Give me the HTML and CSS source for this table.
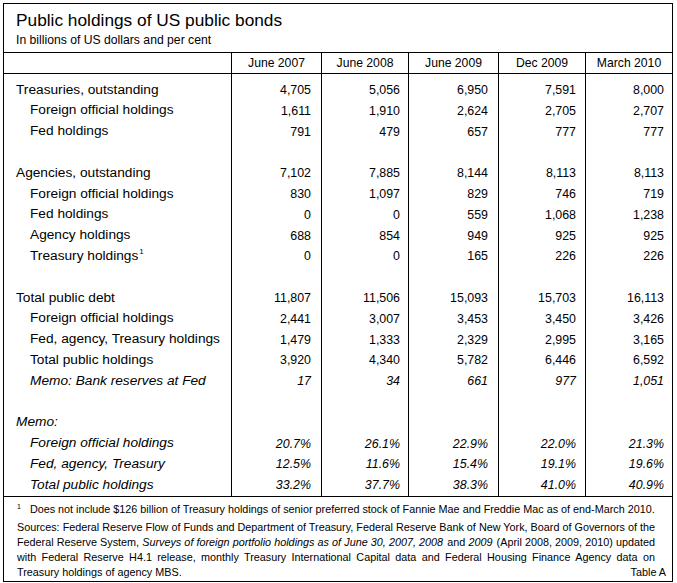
FILE: index.html
```html
<!DOCTYPE html>
<html lang="en">
<head>
<meta charset="utf-8">
<title>Public holdings of US public bonds</title>
<link rel="stylesheet" href="styles.css">
</head>
<body>
<div class="box">
  <header class="head">
    <h1 class="title">Public holdings of US public bonds</h1>
    <p class="sub">In billions of US dollars and per cent</p>
  </header>

  <div class="row colhead">
    <div class="lbl"></div>
    <div class="h">June 2007</div>
    <div class="h">June 2008</div>
    <div class="h">June 2009</div>
    <div class="h">Dec 2009</div>
    <div class="h">March 2010</div>
  </div>

  <div class="body">
    <div class="row spacer"><div></div><div></div><div></div><div></div><div></div><div></div></div>

    <div class="row"><div class="lbl">Treasuries, outstanding</div><div class="n">4,705</div><div class="n">5,056</div><div class="n">6,950</div><div class="n">7,591</div><div class="n">8,000</div></div>
    <div class="row"><div class="lbl ind">Foreign official holdings</div><div class="n">1,611</div><div class="n">1,910</div><div class="n">2,624</div><div class="n">2,705</div><div class="n">2,707</div></div>
    <div class="row"><div class="lbl ind">Fed holdings</div><div class="n">791</div><div class="n">479</div><div class="n">657</div><div class="n">777</div><div class="n">777</div></div>
    <div class="row"><div class="lbl"></div><div class="n"></div><div class="n"></div><div class="n"></div><div class="n"></div><div class="n"></div></div>

    <div class="row"><div class="lbl">Agencies, outstanding</div><div class="n">7,102</div><div class="n">7,885</div><div class="n">8,144</div><div class="n">8,113</div><div class="n">8,113</div></div>
    <div class="row"><div class="lbl ind">Foreign official holdings</div><div class="n">830</div><div class="n">1,097</div><div class="n">829</div><div class="n">746</div><div class="n">719</div></div>
    <div class="row"><div class="lbl ind">Fed holdings</div><div class="n">0</div><div class="n">0</div><div class="n">559</div><div class="n">1,068</div><div class="n">1,238</div></div>
    <div class="row"><div class="lbl ind">Agency holdings</div><div class="n">688</div><div class="n">854</div><div class="n">949</div><div class="n">925</div><div class="n">925</div></div>
    <div class="row"><div class="lbl ind">Treasury holdings<sup class="fn">1</sup></div><div class="n">0</div><div class="n">0</div><div class="n">165</div><div class="n">226</div><div class="n">226</div></div>
    <div class="row"><div class="lbl"></div><div class="n"></div><div class="n"></div><div class="n"></div><div class="n"></div><div class="n"></div></div>

    <div class="row"><div class="lbl">Total public debt</div><div class="n">11,807</div><div class="n">11,506</div><div class="n">15,093</div><div class="n">15,703</div><div class="n">16,113</div></div>
    <div class="row"><div class="lbl ind">Foreign official holdings</div><div class="n">2,441</div><div class="n">3,007</div><div class="n">3,453</div><div class="n">3,450</div><div class="n">3,426</div></div>
    <div class="row"><div class="lbl ind">Fed, agency, Treasury holdings</div><div class="n">1,479</div><div class="n">1,333</div><div class="n">2,329</div><div class="n">2,995</div><div class="n">3,165</div></div>
    <div class="row"><div class="lbl ind">Total public holdings</div><div class="n">3,920</div><div class="n">4,340</div><div class="n">5,782</div><div class="n">6,446</div><div class="n">6,592</div></div>
    <div class="row it"><div class="lbl ind">Memo: Bank reserves at Fed</div><div class="n">17</div><div class="n">34</div><div class="n">661</div><div class="n">977</div><div class="n">1,051</div></div>
    <div class="row"><div class="lbl"></div><div class="n"></div><div class="n"></div><div class="n"></div><div class="n"></div><div class="n"></div></div>

    <div class="row it"><div class="lbl">Memo:</div><div class="n"></div><div class="n"></div><div class="n"></div><div class="n"></div><div class="n"></div></div>
    <div class="row it"><div class="lbl ind">Foreign official holdings</div><div class="n">20.7%</div><div class="n">26.1%</div><div class="n">22.9%</div><div class="n">22.0%</div><div class="n">21.3%</div></div>
    <div class="row it"><div class="lbl ind">Fed, agency, Treasury</div><div class="n">12.5%</div><div class="n">11.6%</div><div class="n">15.4%</div><div class="n">19.1%</div><div class="n">19.6%</div></div>
    <div class="row it"><div class="lbl ind">Total public holdings</div><div class="n">33.2%</div><div class="n">37.7%</div><div class="n">38.3%</div><div class="n">41.0%</div><div class="n">40.9%</div></div>
  </div>

  <footer class="foot">
    <p class="note"><sup class="fnmark">1</sup>Does not include $126 billion of Treasury holdings of senior preferred stock of Fannie Mae and Freddie Mac as of end-March 2010.</p>
    <p class="sources">Sources: Federal Reserve Flow of Funds and Department of Treasury, Federal Reserve Bank of New York, Board of Governors of the Federal Reserve System, <i>Surveys of foreign portfolio holdings as of June 30, 2007, 2008</i> and <i>2009</i> (April 2008, 2009, 2010) updated with Federal Reserve H4.1 release, monthly Treasury International Capital data and Federal Housing Finance Agency data on Treasury holdings of agency MBS.</p>
    <p class="tag">Table A</p>
  </footer>
</div>
</body>
</html>
```

FILE: styles.css
```css
* { box-sizing: border-box; }

html, body {
  margin: 0;
  padding: 0;
  background: #ffffff;
}

body {
  padding: 3px 0 0 3px;
  font-family: "Liberation Sans", Arial, sans-serif;
  color: #000000;
}

.box {
  width: 670px;
  border: 1px solid #000000;
}

/* title block */
.head {
  padding: 6px 0 5px 12px;
  border-bottom: 1px solid #000000;
}

.title {
  margin: 0;
  font-size: 17.3px;
  line-height: 20px;
  font-weight: normal;
}

.sub {
  margin: 3px 0 0 0;
  font-size: 12.2px;
  line-height: 14px;
}

/* rows */
.row {
  display: grid;
  grid-template-columns: 227px 90px 87px 90px 87px 87px;
  height: 20.8px;
  line-height: 20.8px;
}

.row > div + div {
  border-left: 1px solid #000000;
}

.colhead {
  height: 21px;
  line-height: 20px;
  border-bottom: 1px solid #000000;
}

.h {
  text-align: center;
  font-size: 12.2px;
}

.spacer {
  height: 5.6px;
}

.lbl {
  padding-left: 12px;
  font-size: 13.7px;
  white-space: nowrap;
}

.lbl.ind {
  padding-left: 26px;
}

.n {
  text-align: right;
  font-size: 12.4px;
  padding-top: 0.5px;
}

.row .n:nth-child(2) { padding-right: 10px; }
.row .n:nth-child(3) { padding-right: 8px; }
.row .n:nth-child(4) { padding-right: 10px; }
.row .n:nth-child(5) { padding-right: 9px; }
.row .n:nth-child(6) { padding-right: 8px; }

.it { font-style: italic; }

.fn {
  font-size: 8px;
  line-height: 0;
  vertical-align: 6px;
  margin-left: 1px;
}

/* footer */
.foot {
  border-top: 1px solid #000000;
  padding: 5px 17px 0 13px;
  font-size: 10.8px;
}

.note {
  margin: 0;
  line-height: 15px;
}

.fnmark {
  font-size: 7px;
  line-height: 0;
  vertical-align: 4px;
  margin-right: 9px;
}

.sources {
  margin: 3px 0 0 0;
  line-height: 15.3px;
  text-align: justify;
}

.sources i {
  padding-right: 1px;
}

.tag {
  margin: -15.3px -11px 0 0;
  line-height: 15.3px;
  text-align: right;
}
```
